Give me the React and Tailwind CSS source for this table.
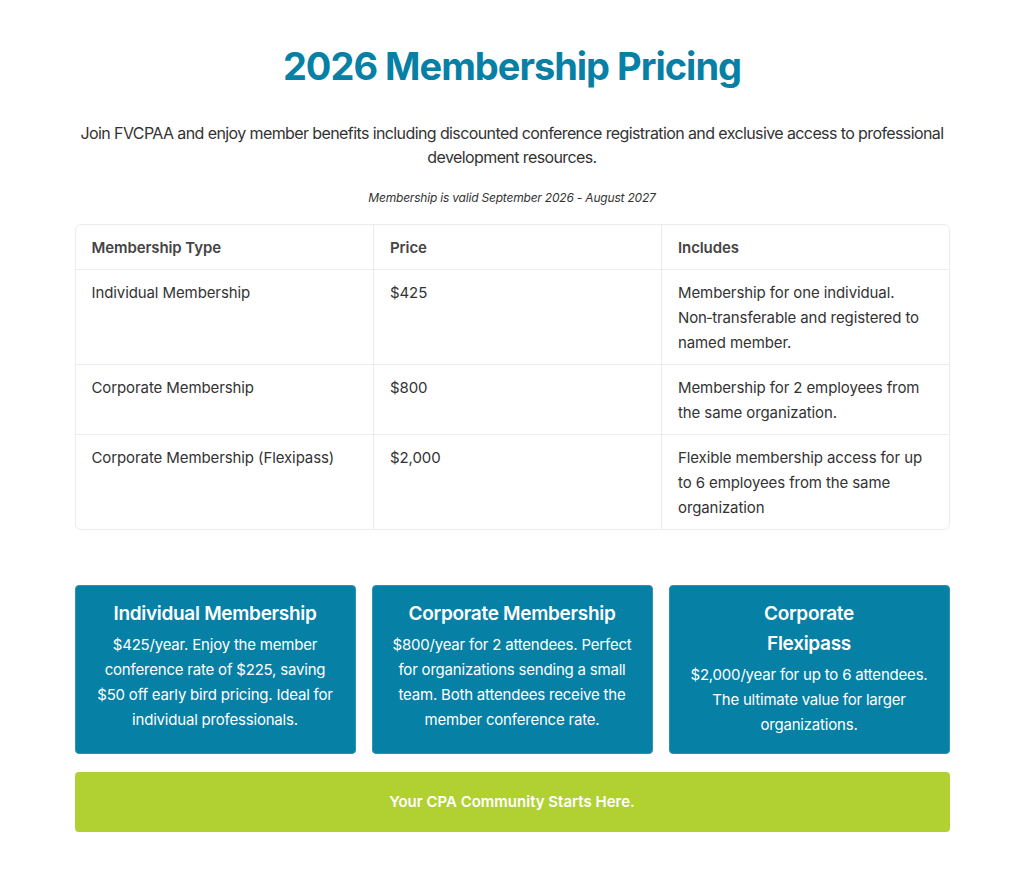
import React from 'react';

const rows = [
    { type: 'Individual Membership', price: '$425', includes: 'Membership for one individual. Non\u2011transferable and registered to named member.' },
    { type: 'Corporate Membership', price: '$800', includes: 'Membership for 2 employees from the same organization.' },
    { type: 'Corporate Membership (Flexipass)', price: '$2,000', includes: 'Flexible membership access for up to 6 employees from the same organization' },
];

const cards = [
    { title: ['Individual Membership'], body: '$425/year. Enjoy the member conference rate of $225, saving $50 off early bird pricing. Ideal for individual professionals.' },
    { title: ['Corporate Membership'], body: '$800/year for 2 attendees. Perfect for organizations sending a small team. Both attendees receive the member conference rate.' },
    { title: ['Corporate', 'Flexipass'], body: '$2,000/year for up to 6 attendees. The ultimate value for larger organizations.' },
];

export default function App() {
    return (
        <div className="min-h-screen bg-white font-['Inter',sans-serif] text-[#333]">
            <div className="max-w-[875px] mx-auto pt-[42px] pb-10">
                <h1 className="text-center text-[38px] leading-[48px] font-bold tracking-[-1px] text-[#0780a6]">2026 Membership Pricing</h1>
                <p className="mt-[31px] text-center text-[16px] leading-[24px] tracking-[-0.6px] text-[#333]">
                    Join FVCPAA and enjoy member benefits including discounted conference registration and exclusive access to professional development resources.
                </p>
                <p className="mt-[19px] text-center text-[12px] leading-[20px] italic tracking-[-0.2px] text-[#333]">Membership is valid September 2026 - August 2027</p>

                <div className="mt-[16px] border border-[#ececec] rounded-md overflow-hidden">
                    <table className="w-full border-collapse text-[15px] leading-[25px] tracking-[-0.1px]">
                        <colgroup>
                            <col className="w-[298px]" />
                            <col className="w-[288px]" />
                            <col />
                        </colgroup>
                        <thead>
                            <tr className="border-b border-[#ececec]">
                                <th className="text-left font-semibold text-[#444] px-4 pt-[10px] pb-[9px]">Membership Type</th>
                                <th className="text-left font-semibold text-[#444] px-4 pt-[10px] pb-[9px] border-l border-[#ececec]">Price</th>
                                <th className="text-left font-semibold text-[#444] px-4 pt-[10px] pb-[9px] border-l border-[#ececec]">Includes</th>
                            </tr>
                        </thead>
                        <tbody>
                            {rows.map((r, i) => (
                                <tr key={r.type} className={i < rows.length - 1 ? 'border-b border-[#ececec]' : ''}>
                                    <td className="align-top px-4 pt-[10px] pb-[9px]">{r.type}</td>
                                    <td className="align-top px-4 pt-[10px] pb-[9px] border-l border-[#ececec]">{r.price}</td>
                                    <td className="align-top px-4 pt-[10px] pb-[9px] border-l border-[#ececec]">{r.includes}</td>
                                </tr>
                            ))}
                        </tbody>
                    </table>
                </div>

                <div className="mt-[55px] grid grid-cols-3 gap-4">
                    {cards.map(c => (
                        <div key={c.body} className="bg-[#0780a6] border border-[#2a92b3] rounded-[4px] px-4 pt-[13px] pb-[16px] text-center text-white">
                            <h3 className="text-[19px] leading-[30px] font-semibold tracking-[-0.3px]">
                                {c.title.map((t, i) => (
                                    <span key={t}>{t}{i < c.title.length - 1 && <br />}</span>
                                ))}
                            </h3>
                            <p className="mt-[3px] text-[15px] leading-[25px] tracking-[-0.2px]">{c.body}</p>
                        </div>
                    ))}
                </div>

                <div className="mt-[18px] h-[60px] rounded-[4px] bg-[#b1d133] flex items-center justify-center">
                    <span className="text-white font-semibold text-[15px]">Your CPA Community Starts Here.</span>
                </div>
            </div>
        </div>
    );
}
